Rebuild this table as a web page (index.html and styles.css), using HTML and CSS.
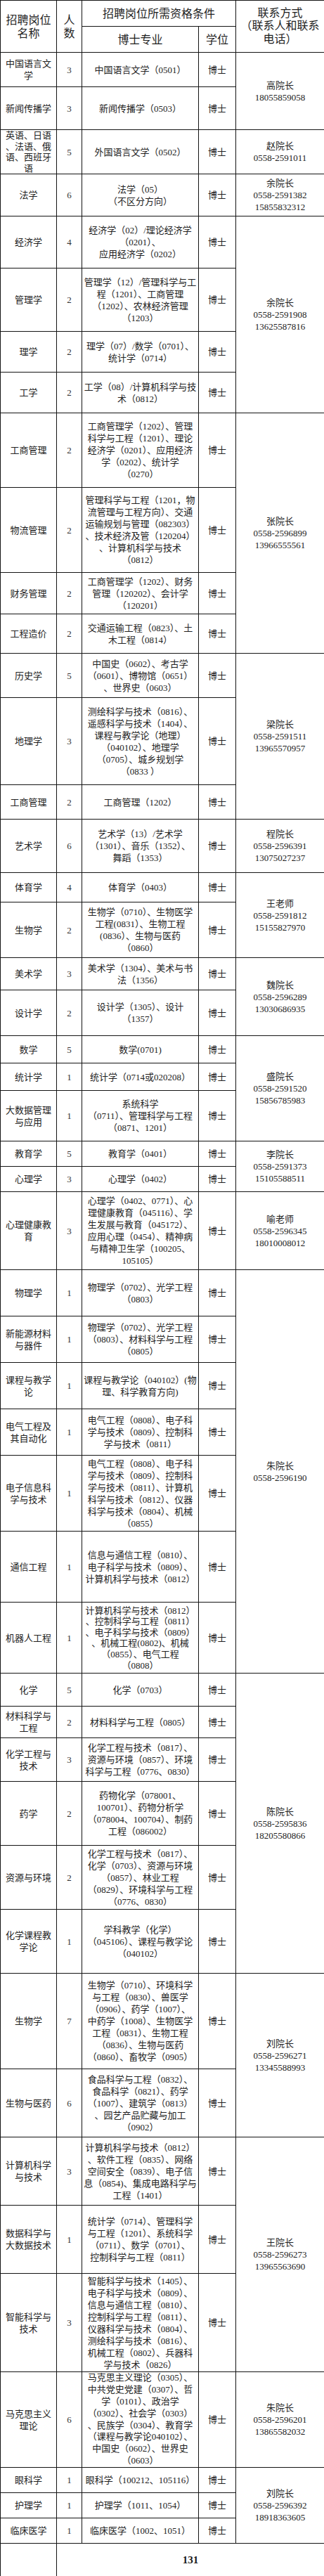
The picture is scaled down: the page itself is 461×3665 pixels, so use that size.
FILE: index.html
```html
<!DOCTYPE html>
<html lang="zh-CN">
<head>
<meta charset="utf-8">
<title>招聘岗位</title>
<link rel="stylesheet" href="styles.css">
</head>
<body>
<table class="tbl">
<colgroup><col class="c1"><col class="c2"><col class="c3"><col class="c4"><col class="c5"></colgroup>
<tbody>
<tr class="h37">
<td class="hd" rowspan="2">招聘岗位<br>名称</td>
<td class="hd" rowspan="2">人<br>数</td>
<td class="hd" colspan="2">招聘岗位所需资格条件</td>
<td class="hd hd5" rowspan="2">联系方式<br>（联系人和联系<br>电话）</td>
</tr>
<tr class="h37">
<td class="hd">博士专业</td>
<td class="hd">学位</td>
</tr>

<tr class="h49"><td>中国语言文<br>学</td><td class="n">3</td><td>中国语言文学（0501）</td><td>博士</td><td rowspan="2">高院长<br>18055859058</td></tr>
<tr class="h61"><td>新闻传播学</td><td class="n">3</td><td>新闻传播学（0503）</td><td>博士</td></tr>
<tr class="h62"><td class="tight">英语、日语<br>、法语、俄<br>语、西班牙<br>语</td><td class="n">5</td><td>外国语言文学（0502）</td><td>博士</td><td>赵院长<br>0558-2591011</td></tr>
<tr class="h60"><td>法学</td><td class="n">6</td><td>法学（05）<br>（不区分方向）</td><td>博士</td><td>余院长<br>0558-2591382<br>15855832312</td></tr>

<tr class="h74"><td>经济学</td><td class="n">4</td><td>经济学（02）/理论经济学<br>（0201）、<br>应用经济学（0202）</td><td>博士</td><td rowspan="4">余院长<br>0558-2591908<br>13625587816</td></tr>
<tr class="h90"><td>管理学</td><td class="n">2</td><td>管理学（12）/管理科学与工<br>程（1201）、工商管理<br>（1202）、农林经济管理<br>（1203）</td><td>博士</td></tr>
<tr class="h58"><td>理学</td><td class="n">2</td><td>理学（07）/数学（0701）、<br>统计学（0714）</td><td>博士</td></tr>
<tr class="h58"><td>工学</td><td class="n">2</td><td>工学（08）/计算机科学与技<br>术（0812）</td><td>博士</td></tr>

<tr class="h106"><td>工商管理</td><td class="n">2</td><td>工商管理学（1202）、管理<br>科学与工程（1201）、理论<br>经济学（0201）、应用经济<br>学（0202）、统计学<br>（0270）</td><td>博士</td><td rowspan="4">张院长<br>0558-2596899<br>13966555561</td></tr>
<tr class="h121"><td>物流管理</td><td class="n">2</td><td>管理科学与工程（1201，物<br>流管理与工程方向）、交通<br>运输规划与管理（082303）<br>、技术经济及管（120204）<br>、计算机科学与技术<br>（0812）</td><td>博士</td></tr>
<tr class="h59"><td>财务管理</td><td class="n">2</td><td>工商管理学（1202）、财务<br>管理（120202）、会计学<br>（120201）</td><td>博士</td></tr>
<tr class="h56"><td>工程造价</td><td class="n">2</td><td>交通运输工程（0823）、土<br>木工程（0814）</td><td>博士</td></tr>

<tr class="h63"><td>历史学</td><td class="n">5</td><td>中国史（0602）、考古学<br>（0601）、博物馆（0651）<br>、世界史（0603）</td><td>博士</td><td rowspan="3">梁院长<br>0558-2591511<br>13965570957</td></tr>
<tr class="h124"><td>地理学</td><td class="n">3</td><td>测绘科学与技术（0816）、<br>遥感科学与技术（1404）、<br>课程与教学论（地理）<br>（040102）、地理学<br>（0705）、城乡规划学<br>（0833 ）</td><td>博士</td></tr>
<tr class="h49"><td>工商管理</td><td class="n">2</td><td>工商管理（1202）</td><td>博士</td></tr>

<tr class="h76"><td>艺术学</td><td class="n">6</td><td>艺术学（13）/艺术学<br>（1301）、音乐（1352）、<br>舞蹈（1353）</td><td>博士</td><td>程院长<br>0558-2596391<br>13075027237</td></tr>

<tr class="h42"><td>体育学</td><td class="n">4</td><td>体育学（0403）</td><td>博士</td><td rowspan="2">王老师<br>0558-2591812<br>15155827970</td></tr>
<tr class="h79"><td>生物学</td><td class="n">2</td><td>生物学（0710）、生物医学<br>工程(0831）、生物工程<br>(0836）、生物与医药<br>（0860）</td><td>博士</td></tr>

<tr class="h46"><td>美术学</td><td class="n">3</td><td>美术学（1304）、美术与书<br>法（1356）</td><td>博士</td><td rowspan="2">魏院长<br>0558-2596289<br>13030686935</td></tr>
<tr class="h65"><td>设计学</td><td class="n">2</td><td>设计学（1305）、设计<br>（1357）</td><td>博士</td></tr>

<tr class="h39"><td>数学</td><td class="n">5</td><td>数学(0701)</td><td>博士</td><td rowspan="3">盛院长<br>0558-2591520<br>15856785983</td></tr>
<tr class="h39"><td>统计学</td><td class="n">1</td><td>统计学（0714或020208）</td><td>博士</td></tr>
<tr class="h72"><td>大数据管理<br>与应用</td><td class="n">1</td><td>系统科学<br>（0711）、管理科学与工程<br>（0871、1201）</td><td>博士</td></tr>

<tr class="h36"><td>教育学</td><td class="n">5</td><td>教育学（0401）</td><td>博士</td><td rowspan="2">李院长<br>0558-2591373<br>15105588511</td></tr>
<tr class="h36"><td>心理学</td><td class="n">3</td><td>心理学（0402）</td><td>博士</td></tr>

<tr class="h111"><td>心理健康教<br>育</td><td class="n">3</td><td>心理学（0402、0771）、心<br>理健康教育（045116）、学<br>生发展与教育（045172）、<br>应用心理（0454）、精神病<br>与精神卫生学（100205、<br>105105）</td><td>博士</td><td>喻老师<br>0558-2596345<br>18010008012</td></tr>

<tr class="h66"><td>物理学</td><td class="n">1</td><td>物理学（0702）、光学工程<br>（0803）</td><td>博士</td><td rowspan="7">朱院长<br>0558-2596190</td></tr>
<tr class="h66"><td>新能源材料<br>与器件</td><td class="n">1</td><td>物理学（0702）、光学工程<br>（0803）、材料科学与工程<br>（0805）</td><td>博士</td></tr>
<tr class="h66"><td>课程与教学<br>论</td><td class="n">1</td><td>课程与教学论（040102）(物<br>理、科学教育方向)</td><td>博士</td></tr>
<tr class="h66"><td>电气工程及<br>其自动化</td><td class="n">1</td><td>电气工程（0808）、电子科<br>学与技术（0809）、控制科<br>学与技术（0811）</td><td>博士</td></tr>
<tr class="h108"><td>电子信息科<br>学与技术</td><td class="n">1</td><td>电气工程（0808）、电子科<br>学与技术（0809）、控制科<br>学与技术（0811）、计算机<br>科学与技术（0812）、仪器<br>科学与技术（0804）、机械<br>（0855）</td><td>博士</td></tr>
<tr class="h101"><td>通信工程</td><td class="n">1</td><td>信息与通信工程（0810）、<br>电子科学与技术（0809）、<br>计算机科学与技术（0812）</td><td>博士</td></tr>
<tr class="h101"><td>机器人工程</td><td class="n">1</td><td class="tight">计算机科学与技术（0812）<br>、控制科学与工程（0811）<br>、电子科学与技术（0809）<br>、机械工程(0802)、机械<br>（0855）、电气工程<br>（0808）</td><td>博士</td></tr>

<tr class="h47"><td>化学</td><td class="n">5</td><td>化学（0703）</td><td>博士</td><td rowspan="6">陈院长<br>0558-2595836<br>18205580866</td></tr>
<tr class="h45"><td>材料科学与<br>工程</td><td class="n">2</td><td>材料科学与工程（0805）</td><td>博士</td></tr>
<tr class="h62"><td>化学工程与<br>技术</td><td class="n">3</td><td>化学工程与技术（0817）、<br>资源与环境（0857）、环境<br>科学与工程（0776、0830）</td><td>博士</td></tr>
<tr class="h91"><td>药学</td><td class="n">2</td><td>药物化学（078001、<br>100701）、药物分析学<br>（078004、100704）、制药<br>工程（086002）</td><td>博士</td></tr>
<tr class="h91"><td>资源与环境</td><td class="n">2</td><td>化学工程与技术（0817）、<br>化学（0703）、资源与环境<br>（0857）、林业工程<br>（0829）、环境科学与工程<br>（0776、0830）</td><td>博士</td></tr>
<tr class="h91"><td>化学课程教<br>学论</td><td class="n">1</td><td>学科教学（化学）<br>（045106）、课程与教学论<br>（040102）</td><td>博士</td></tr>

<tr class="h136"><td>生物学</td><td class="n">7</td><td>生物学（0710）、环境科学<br>与工程（0830）、兽医学<br>（0906）、药学（1007）、<br>中药学（1008）、生物医学<br>工程（0831）、生物工程<br>（0836）、生物与医药<br>（0860）、畜牧学（0905）</td><td>博士</td><td rowspan="2">刘院长<br>0558-2596271<br>13345588993</td></tr>
<tr class="h97"><td>生物与医药</td><td class="n">6</td><td>食品科学与工程（0832）、<br>食品科学（0821）、药学<br>（1007）、建筑学（0813）<br>、园艺产品贮藏与加工<br>（0902）</td><td>博士</td></tr>

<tr class="h97"><td>计算机科学<br>与技术</td><td class="n">3</td><td>计算机科学与技术（0812）<br>、软件工程（0835）、网络<br>空间安全（0839）、电子信<br>息（0854)、集成电路科学与<br>工程（1401）</td><td>博士</td><td rowspan="3">王院长<br>0558-2596273<br>13965563690</td></tr>
<tr class="h97"><td>数据科学与<br>大数据技术</td><td class="n">1</td><td>统计学（0714）、管理科学<br>与工程（1201）、系统科学<br>（0711）、数学（0701）、<br>控制科学与工程（0811）</td><td>博士</td></tr>
<tr class="h140"><td>智能科学与<br>技术</td><td class="n">3</td><td>智能科学与技术（1405）、<br>电子科学与技术（0809）、<br>信息与通信工程（0810）、<br>控制科学与工程（0811）、<br>仪器科学与技术（0804）、<br>测绘科学与技术（0816）、<br>机械工程（0802）、兵器科<br>学与技术（0826）</td><td>博士</td></tr>

<tr class="h135"><td>马克思主义<br>理论</td><td class="n">6</td><td class="tight2">马克思主义理论（0305）、<br>中共党史党建（0307）、哲<br>学（0101）、政治学<br>（0302）、社会学（0303）<br>、民族学（0304）、教育学<br>（课程与教学论040102）、<br>中国史（0602）、世界史<br>（0603）</td><td>博士</td><td>朱院长<br>0558-2596201<br>13865582032</td></tr>

<tr class="h36"><td>眼科学</td><td class="n">1</td><td>眼科学（100212、105116）</td><td>博士</td><td rowspan="3">刘院长<br>0558-2596392<br>18918363605</td></tr>
<tr class="h36"><td>护理学</td><td class="n">1</td><td>护理学（1011、1054）</td><td>博士</td></tr>
<tr class="h36"><td>临床医学</td><td class="n">1</td><td>临床医学（1002、1051）</td><td>博士</td></tr>

<tr class="h48"><td></td><td class="total" colspan="4">131</td></tr>
</tbody>
</table>
</body>
</html>
```
FILE: styles.css
```css
html, body {
  margin: 0;
  padding: 0;
  background: #ffffff;
}

.tbl {
  border-collapse: collapse;
  table-layout: fixed;
  width: 461px;
  font-family: "Liberation Serif", "Noto Sans CJK SC", serif;
  font-size: 13px;
  line-height: 17px;
  color: #222222;
}

.c1 { width: 80px; }
.c2 { width: 36px; }
.c3 { width: 166px; }
.c4 { width: 53px; }
.c5 { width: 126px; }

.tbl td {
  border: 1px solid #141414;
  padding: 0 1px;
  text-align: center;
  vertical-align: middle;
  white-space: nowrap;
}

.tbl td.hd {
  font-size: 16px;
  line-height: 19px;
  color: #1e1e1e;
}

.tbl td.hd5 {
  line-height: 18.4px;
}

.tbl td.n {
  color: #333333;
}

.tbl td.tight {
  line-height: 15.6px;
}

.tbl td.tight2 {
  line-height: 16.8px;
}

.tbl td.total {
  font-family: "Liberation Serif", serif;
  font-weight: bold;
  font-size: 15px;
  color: #1a1a1a;
}

.h36 { height: 36px; }
.h37 { height: 37px; }
.h39 { height: 39px; }
.h42 { height: 42px; }
.h45 { height: 45px; }
.h46 { height: 46px; }
.h47 { height: 47px; }
.h48 { height: 48px; }
.h49 { height: 49px; }
.h56 { height: 56px; }
.h58 { height: 58px; }
.h59 { height: 59px; }
.h60 { height: 60px; }
.h61 { height: 61px; }
.h62 { height: 62px; }
.h63 { height: 63px; }
.h65 { height: 65px; }
.h66 { height: 66px; }
.h72 { height: 72px; }
.h74 { height: 74px; }
.h76 { height: 76px; }
.h79 { height: 79px; }
.h90 { height: 90px; }
.h91 { height: 91px; }
.h97 { height: 97px; }
.h101 { height: 101px; }
.h106 { height: 106px; }
.h108 { height: 108px; }
.h111 { height: 111px; }
.h121 { height: 121px; }
.h124 { height: 124px; }
.h135 { height: 135px; }
.h136 { height: 136px; }
.h140 { height: 140px; }
```
